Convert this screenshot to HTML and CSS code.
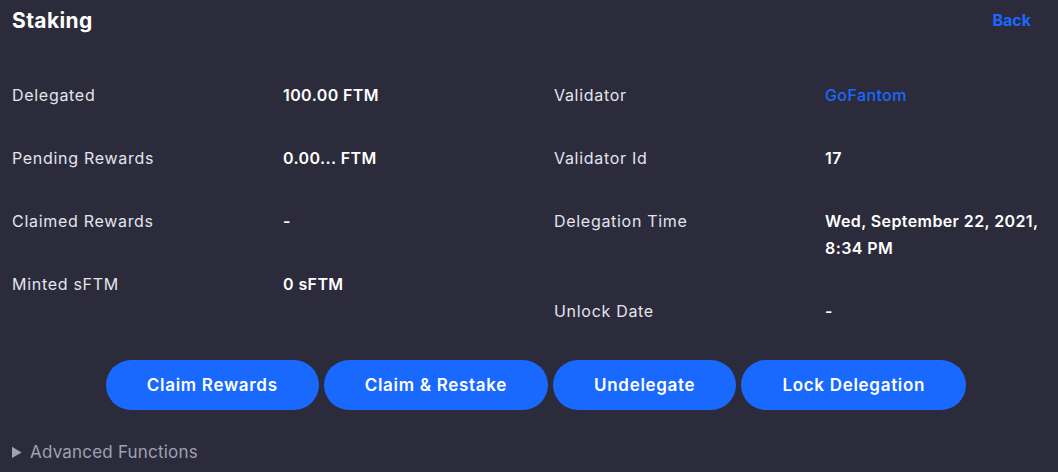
FILE: index.html
```html
<!DOCTYPE html>
<html>
<head>
<meta charset="utf-8">
<link rel="stylesheet" href="styles.css">
</head>
<body>
<div class="page">
  <header class="head">
    <h1 class="title">Staking</h1>
    <a class="back" href="#">Back</a>
  </header>
  <div class="details">
    <dl class="col">
      <div class="row"><dt>Delegated</dt><dd>100.00 FTM</dd></div>
      <div class="row"><dt>Pending Rewards</dt><dd>0.00... FTM</dd></div>
      <div class="row"><dt>Claimed Rewards</dt><dd>-</dd></div>
      <div class="row"><dt>Minted sFTM</dt><dd>0 sFTM</dd></div>
    </dl>
    <dl class="col">
      <div class="row"><dt>Validator</dt><dd><a class="link" href="#">GoFantom</a></dd></div>
      <div class="row"><dt>Validator Id</dt><dd>17</dd></div>
      <div class="row"><dt>Delegation Time</dt><dd>Wed, September 22, 2021,<br>8:34 PM</dd></div>
      <div class="row"><dt>Unlock Date</dt><dd>-</dd></div>
    </dl>
  </div>
  <div class="actions">
    <button class="btn">Claim Rewards</button>
    <button class="btn">Claim &amp; Restake</button>
    <button class="btn">Undelegate</button>
    <button class="btn">Lock Delegation</button>
  </div>
  <details class="adv">
    <summary>Advanced Functions</summary>
  </details>
</div>
</body>
</html>
```
FILE: styles.css
```css
html, body {
  margin: 0;
  padding: 0;
  background: #2b2b3c;
}
body {
  font-family: Inter, "Open Sans", sans-serif;
  color: #fff;
  width: 1058px;
  height: 472px;
  overflow: hidden;
}
.page {
  padding: 0 12px;
}
.head {
  display: flex;
  justify-content: space-between;
  align-items: center;
  height: 40px;
}
.title {
  margin: 0;
  font-size: 21px;
  font-weight: 700;
  letter-spacing: 0.4px;
}
.back {
  color: #1969ff;
  font-weight: 700;
  font-size: 16px;
  text-decoration: none;
  margin-right: 15px;
}
.details {
  display: grid;
  grid-template-columns: 542px 1fr;
  margin-top: 42px;
}
.col {
  margin: 0;
}
.row {
  display: grid;
  grid-template-columns: 271px 1fr;
  padding-bottom: 36px;
  line-height: 27px;
  font-size: 16px;
}
dt {
  color: #e4e4ec;
  font-weight: 400;
  letter-spacing: 0.7px;
}
dd {
  margin: 0;
  font-weight: 600;
  letter-spacing: 0.4px;
}
.link {
  color: #1969ff;
  text-decoration: none;
  font-weight: 500;
}
.actions {
  display: flex;
  justify-content: center;
  gap: 5px;
  margin-top: -1px;
  padding-left: 14px;
}
.btn {
  height: 50px;
  border: none;
  border-radius: 25px;
  background: #1969ff;
  color: #fff;
  font-family: inherit;
  font-size: 17px;
  font-weight: 600;
  letter-spacing: 0.7px;
  padding: 0 41px;
}
.adv {
  margin-top: 32px;
  color: #a0a0b2;
  font-size: 17px;
  letter-spacing: 0.2px;
}
.adv summary {
  cursor: pointer;
}
```
